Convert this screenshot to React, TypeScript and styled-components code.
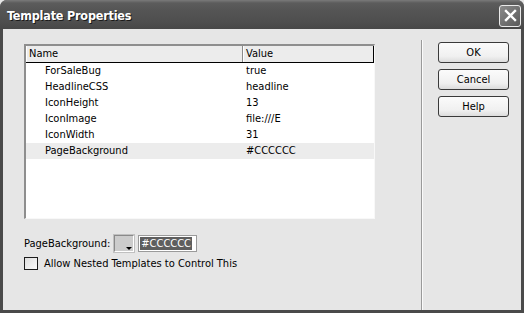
import React from "react";
import styled, { createGlobalStyle } from "styled-components";

const Global = createGlobalStyle`
  html, body { margin: 0; padding: 0; background: #e6e6e6; }
  body { width: 524px; height: 313px; overflow: hidden; }
  * { box-sizing: border-box; }
`;

const Window = styled.div`
  width: 524px;
  height: 313px;
  display: flex;
  flex-direction: column;
  background: #4a4a4a;
  border-radius: 7px 7px 0 0;
  overflow: hidden;
  font-family: "DejaVu Sans", "Liberation Sans", sans-serif;
  font-stretch: condensed;
  font-size: 11px;
  color: #000;
`;

const TitleBar = styled.div`
  height: 29px;
  flex: none;
  display: flex;
  align-items: center;
  justify-content: space-between;
  padding: 0 3px 0 7px;
  background: linear-gradient(#7a7a7a 0px, #5c5c5c 3px, #555 10px, #4e4e4e 22px, #474747 29px);
`;

const Title = styled.div`
  color: #fff;
  font-family: "DejaVu Sans", sans-serif;
  font-stretch: condensed;
  font-weight: bold;
  font-size: 12.5px;
  letter-spacing: -0.2px;
  text-shadow: 1px 1px 0 #1a1a1a;
  padding-top: 1px;
`;

const CloseButton = styled.div`
  width: 22px;
  height: 22px;
  margin-top: 2px;
  border: 1px solid #eaeaea;
  border-radius: 3px;
  background: linear-gradient(135deg, #8a8a8a, #5a5a5a);
  display: flex;
  align-items: center;
  justify-content: center;
`;

const Frame = styled.div`
  flex: 1;
  display: flex;
  margin: 0 3px 3px 3px;
  background: #e6e6e6;
`;

const Main = styled.div`
  width: 418px;
  padding: 15px 0 0 21px;
  display: flex;
  flex-direction: column;
`;

const Separator = styled.div`
  width: 2px;
  margin-top: 11px;
  border-left: 1px solid #9a9a9a;
  border-right: 1px solid #fafafa;
`;

const Side = styled.div`
  flex: 1;
  padding: 13px 0 0 15px;
  display: flex;
  flex-direction: column;
  gap: 6px;
`;

const Button = styled.div`
  width: 71px;
  height: 21px;
  border: 1px solid #3a3a3a;
  border-radius: 3px;
  background: linear-gradient(#fbfbfb, #f0f0f0 70%, #dcdcdc);
  display: flex;
  align-items: center;
  justify-content: center;
  font-size: 11px;
`;

const ListBox = styled.div`
  width: 351px;
  height: 175px;
  background: #fff;
  border-top: 2px solid #8e8e8e;
  border-left: 2px solid #8e8e8e;
  border-right: 1px solid #f8f8f8;
  border-bottom: 1px solid #f8f8f8;
  display: flex;
  flex-direction: column;
`;

const Header = styled.div`
  display: grid;
  grid-template-columns: 217px 131px;
  height: 17px;
  background: #ececec;
  border-bottom: 1px solid #000;
`;

const HeadCell = styled.div<{ $last?: boolean }>`
  padding-left: 2px;
  line-height: 16px;
  border-right: 1px solid ${(p) => (p.$last ? "#000" : "#8a8a8a")};
  border-left: 1px solid #fff;
`;

const Row = styled.div<{ $selected?: boolean }>`
  display: grid;
  grid-template-columns: 217px 131px;
  height: 16px;
  line-height: 16px;
  background: ${(p) => (p.$selected ? "#ececec" : "transparent")};
`;

const NameCell = styled.div`
  padding-left: 19px;
`;

const ValueCell = styled.div`
  padding-left: 3px;
`;

const FieldRow = styled.div`
  display: flex;
  align-items: center;
  margin-top: 16px;
  height: 17px;
`;

const Label = styled.span`
  margin-right: 4px;
`;

const Swatch = styled.div`
  position: relative;
  width: 20px;
  height: 17px;
  background: #cccccc;
  border: 1px solid #fff;
  border-top-color: #8a8a8a;
  border-left-color: #8a8a8a;
  outline: 1px solid #c0c0c0;
`;

const SwatchArrow = styled.div`
  position: absolute;
  right: 1px;
  bottom: 1px;
  width: 0;
  height: 0;
  border-left: 3px solid transparent;
  border-right: 3px solid transparent;
  border-top: 3px solid #000;
`;

const TextInput = styled.div`
  width: 59px;
  height: 17px;
  margin-left: 4px;
  background: #fff;
  border: 1px solid #9a9a9a;
  padding: 1px;
  display: flex;
`;

const Selected = styled.span`
  background: #5e5e5e;
  color: #fff;
  line-height: 13px;
  padding: 0 1px 0 1px;
  font-size: 11px;
`;

const CheckRow = styled.div`
  display: flex;
  align-items: center;
  margin-top: 5px;
  height: 13px;
`;

const CheckBox = styled.div`
  width: 14px;
  height: 13px;
  border: 1px solid #1c1c1c;
  background: linear-gradient(135deg, #dedede, #fbfbfb);
  margin: 0 6px 0 0;
`;

const rows = [
  ["ForSaleBug", "true"],
  ["HeadlineCSS", "headline"],
  ["IconHeight", "13"],
  ["IconImage", "file:///E"],
  ["IconWidth", "31"],
  ["PageBackground", "#CCCCCC"],
];

export default function App() {
  return (
    <>
      <Global />
      <Window>
        <TitleBar>
          <Title>Template Properties</Title>
          <CloseButton>
            <svg width="13" height="13" viewBox="0 0 13 13">
              <path d="M2 2 L11 11 M11 2 L2 11" stroke="#fff" strokeWidth="2.4" strokeLinecap="square" />
            </svg>
          </CloseButton>
        </TitleBar>
        <Frame>
          <Main>
            <ListBox>
              <Header>
                <HeadCell>Name</HeadCell>
                <HeadCell $last>Value</HeadCell>
              </Header>
              {rows.map(([n, v], i) => (
                <Row key={n} $selected={i === rows.length - 1}>
                  <NameCell>{n}</NameCell>
                  <ValueCell>{v}</ValueCell>
                </Row>
              ))}
            </ListBox>
            <FieldRow>
              <Label>PageBackground:</Label>
              <Swatch>
                <SwatchArrow />
              </Swatch>
              <TextInput>
                <Selected>#CCCCCC</Selected>
              </TextInput>
            </FieldRow>
            <CheckRow>
              <CheckBox />
              <span>Allow Nested Templates to Control This</span>
            </CheckRow>
          </Main>
          <Separator />
          <Side>
            <Button>OK</Button>
            <Button>Cancel</Button>
            <Button>Help</Button>
          </Side>
        </Frame>
      </Window>
    </>
  );
}
